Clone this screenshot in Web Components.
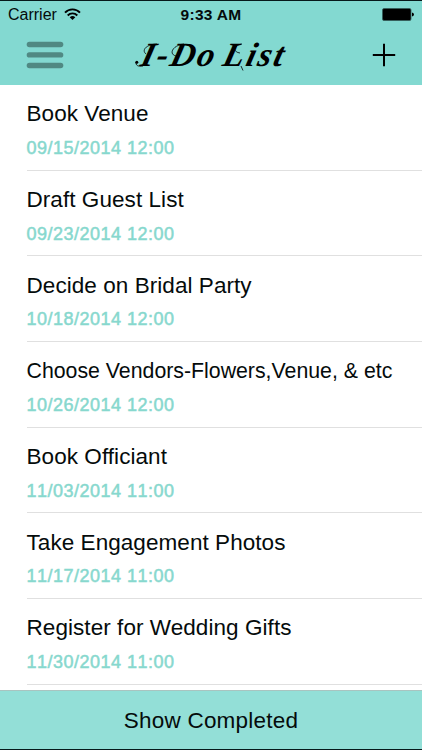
<!DOCTYPE html>
<html lang="en">
<head>
<meta charset="utf-8">
<title>I-Do List</title>
<style>
  body {
    margin: 0;
    font-family: "Liberation Sans", Arial, sans-serif;
    color: #050b0b;
    background: #fff;
  }
</style>
</head>
<body>
<todo-app>
  <status-bar slot="top" carrier="Carrier" time="9:33 AM"></status-bar>
  <nav-bar slot="top">I-Do List</nav-bar>
  <task-item date="09/15/2014 12:00">Book Venue</task-item>
  <task-item date="09/23/2014 12:00">Draft Guest List</task-item>
  <task-item date="10/18/2014 12:00">Decide on Bridal Party</task-item>
  <task-item date="10/26/2014 12:00" shrink>Choose Vendors-Flowers,Venue, &amp; etc</task-item>
  <task-item date="11/03/2014 11:00">Book Officiant</task-item>
  <task-item date="11/17/2014 11:00">Take Engagement Photos</task-item>
  <task-item date="11/30/2014 11:00">Register for Wedding Gifts</task-item>
  <tool-bar slot="bottom">Show Completed</tool-bar>
</todo-app>

<script>
class TodoApp extends HTMLElement {
  constructor() {
    super();
    this.attachShadow({ mode: 'open' });
    this.shadowRoot.innerHTML = `
      <style>
        :host {
          display: flex;
          flex-direction: column;
          box-sizing: border-box;
          width: 422px;
          height: 750px;
          overflow: hidden;
          border-top: 1px solid #06191b;
          border-bottom: 1px solid #06191b;
        }
        header {
          flex: none;
          height: 84px;
          background: #83d9d1;
        }
        main {
          flex: 1;
          min-height: 0;
          overflow: hidden;
        }
      </style>
      <header><slot name="top"></slot></header>
      <main><slot></slot></main>
      <slot name="bottom"></slot>
    `;
  }
}

class StatusBar extends HTMLElement {
  constructor() {
    super();
    this.attachShadow({ mode: 'open' });
    this.shadowRoot.innerHTML = `
      <style>
        :host {
          display: grid;
          grid-template-columns: 1fr auto 1fr;
          align-items: center;
          height: 27px;
          padding: 0 8px;
          font-size: 16px;
        }
        .left {
          display: flex;
          align-items: center;
          gap: 7px;
        }
        .time {
          font-weight: bold;
          font-size: 15.5px;
          letter-spacing: .3px;
        }
        .battery {
          justify-self: end;
        }
        svg {
          display: block;
        }
      </style>
      <div class="left">
        <span class="carrier"></span>
        <svg width="17" height="13" viewBox="0 0 17 13" fill="none" stroke="#000" stroke-width="1.9">
          <path d="M1 4.7C5 .3 12 .3 16 4.7"/>
          <path d="M3.7 7.5C6.4 4.6 10.6 4.6 13.3 7.5"/>
          <path d="M8.5 12L5.7 9.2Q8.5 6.9 11.3 9.2Z" fill="#000" stroke="none"/>
        </svg>
      </div>
      <span class="time"></span>
      <svg class="battery" width="32" height="13" viewBox="0 0 32 13">
        <rect x=".5" y=".5" width="28.5" height="12" rx="1.5" stroke="#355c59" stroke-width=".8"/>
        <path d="M30 4.5Q32 4.8 32 6.5T30 8.5Z"/>
      </svg>
    `;
  }

  connectedCallback() {
    this.shadowRoot.querySelector('.carrier').textContent = this.getAttribute('carrier');
    this.shadowRoot.querySelector('.time').textContent = this.getAttribute('time');
  }
}

class NavBar extends HTMLElement {
  constructor() {
    super();
    this.attachShadow({ mode: 'open' });
    this.shadowRoot.innerHTML = `
      <style>
        :host {
          display: grid;
          grid-template-columns: 1fr 152px 1fr;
          align-items: center;
          height: 54px;
          padding: 0 26px;
        }
        .brand {
          position: relative;
        }
        h1 {
          margin: 0 0 0 7px;
          font: italic bold 34px/36px "Snell Roundhand", "Liberation Serif", serif;
          letter-spacing: 2.3px;
          word-spacing: -4px;
          white-space: nowrap;
          color: #000;
          transform: skewX(-14deg);
        }
        .swash {
          position: absolute;
          left: 0;
          top: 0;
        }
        .add {
          justify-self: end;
        }
        svg {
          display: block;
        }
      </style>
      <svg width="38" height="28" viewBox="0 0 38 28" fill="#508983">
        <rect x=".7" y=".8" width="36.6" height="5.4" rx="2.7"/>
        <rect x=".7" y="11.2" width="36.6" height="5.4" rx="2.7"/>
        <rect x=".7" y="21.8" width="36.6" height="5.4" rx="2.7"/>
      </svg>
      <div class="brand">
        <h1><slot></slot></h1>
        <svg class="swash" width="154" height="40" viewBox="0 0 154 40" fill="none" stroke="#000" stroke-width=".8">
          <path d="M8 29C3 30 0 28 1.5 25"/>
          <circle cx="1.8" cy="25.3" r="1.5" fill="#000" stroke="none"/>
          <path d="M11 17C6 13 12 7 22 7"/>
          <path d="M41 19C33 17 38 8 49 7"/>
          <path d="M105 16C97 15 99 8 107 7"/>
          <path d="M106 29L108 33.500"/>
        </svg>
      </div>
      <svg class="add" width="24" height="24" viewBox="0 0 24 24" stroke="#000" stroke-width="2">
        <path d="M.8 12H23.2M12 .8V23.2"/>
      </svg>
    `;
  }
}

class TaskItem extends HTMLElement {
  constructor() {
    super();
    this.attachShadow({ mode: 'open' });
    this.shadowRoot.innerHTML = `
      <style>
        :host {
          display: block;
          box-sizing: border-box;
          height: 85.67px;
          margin-left: 26.5px;
          padding-top: 16.4px;
          border-bottom: 1px solid #e0e0e0;
          white-space: nowrap;
        }
        .title {
          font-size: 22.5px;
          line-height: 26px;
          letter-spacing: .06px;
        }
        :host([shrink]) .title {
          font-size: 21.3px;
          letter-spacing: 0;
        }
        .date {
          margin-top: 9.6px;
          font-size: 18px;
          line-height: 22px;
          letter-spacing: .5px;
          font-kerning: none;
          color: #87d8ce;
          -webkit-text-stroke: .5px #87d8ce;
        }
      </style>
      <div class="title"><slot></slot></div>
      <div class="date"></div>
    `;
  }

  connectedCallback() {
    this.shadowRoot.querySelector('.date').textContent = this.getAttribute('date');
  }
}

class ToolBar extends HTMLElement {
  constructor() {
    super();
    this.attachShadow({ mode: 'open' });
    this.shadowRoot.innerHTML = `
      <style>
        :host {
          display: flex;
          flex: none;
          align-items: center;
          justify-content: center;
          box-sizing: border-box;
          height: 59px;
          padding-top: 1px;
          border-top: 1px solid #a9c4c0;
          background: #93dfd7;
          font-size: 22.5px;
          letter-spacing: .22px;
        }
      </style>
      <slot></slot>
    `;
  }
}

customElements.define('todo-app', TodoApp);
customElements.define('status-bar', StatusBar);
customElements.define('nav-bar', NavBar);
customElements.define('task-item', TaskItem);
customElements.define('tool-bar', ToolBar);
</script>
</body>
</html>
